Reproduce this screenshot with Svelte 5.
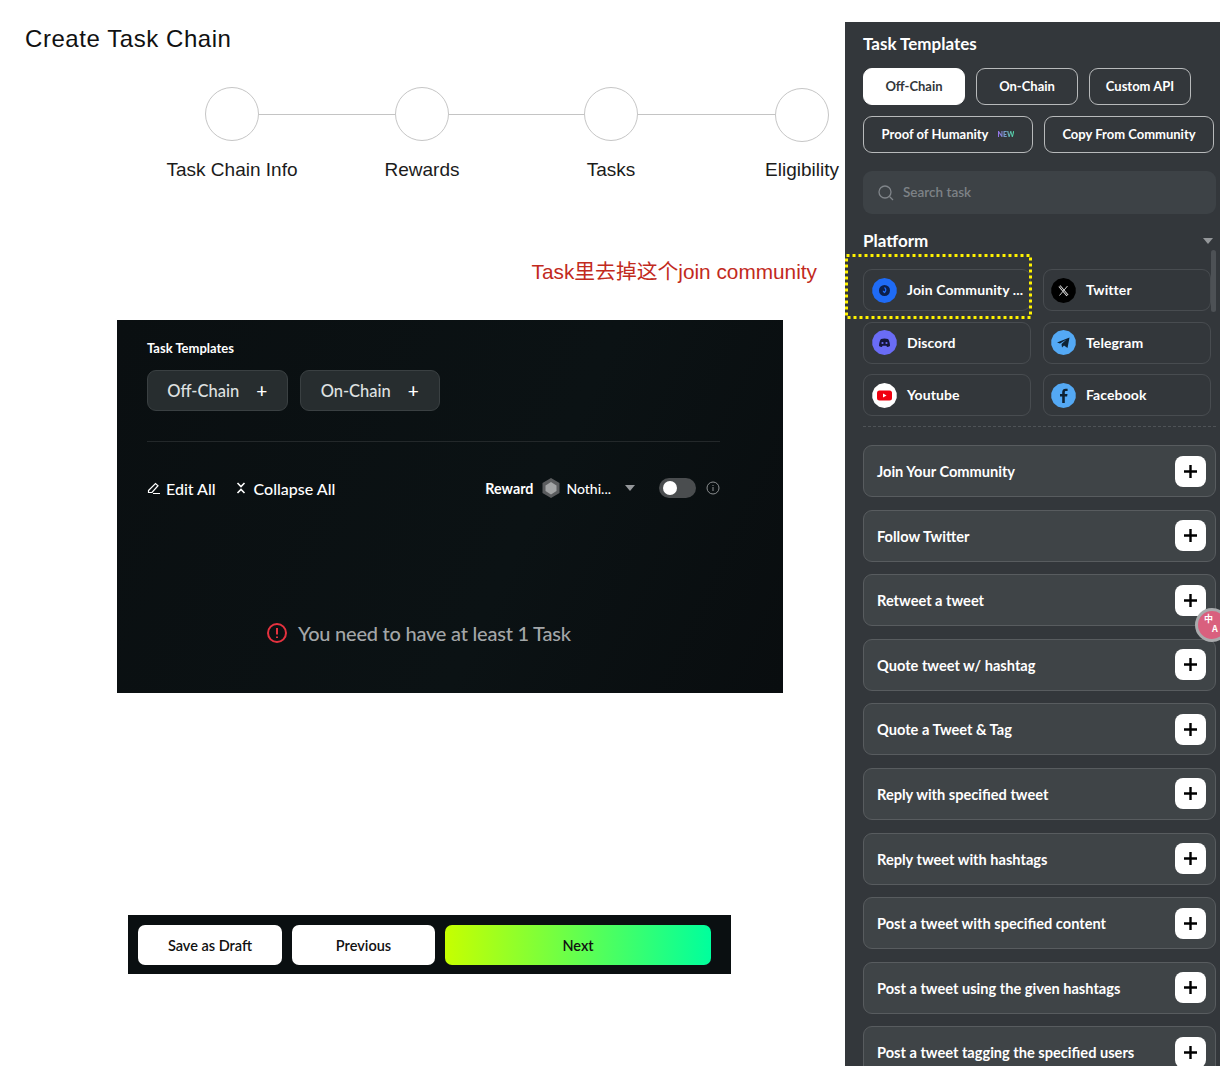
<script>
  const steps = ['Task Chain Info', 'Rewards', 'Tasks', 'Eligibility'];
  const lineWidths = [136, 135, 137];
  const tabsOne = ['Off-Chain', 'On-Chain', 'Custom API'];
  const tasks = [
    'Join Your Community', 'Follow Twitter', 'Retweet a tweet', 'Quote tweet w/ hashtag',
    'Quote a Tweet & Tag', 'Reply with specified tweet', 'Reply tweet with hashtags',
    'Post a tweet with specified content', 'Post a tweet using the given hashtags',
    'Post a tweet tagging the specified users'
  ];
  const gon = '12.5,0 18,1.3 22.5,5 24.7,10 24.7,15 22.5,20 18,23.7 12.5,25 7,23.7 2.5,20 .3,15 .3,10 2.5,5 7,1.3';
</script>

<div class="page">
  <main class="left">
    <h1>Create Task Chain</h1>
    <div class="stepper">
      {#each steps as s, i}
        <div class="step" class:low={i === 3}>
          <div class="circle"></div>
          <div class="label">{s}</div>
        </div>
        {#if i < 3}<div class="line" style="width: {lineWidths[i]}px"></div>{/if}
      {/each}
    </div>
    <p class="note">Task里去掉这个join community</p>

    <section class="panel">
      <h3>Task Templates</h3>
      <div class="chips">
        <div class="chip">Off-Chain <span>+</span></div>
        <div class="chip">On-Chain <span>+</span></div>
      </div>
      <hr />
      <div class="tools">
        <svg width="14" height="14" viewBox="0 0 14 14" fill="none" stroke="#fff" stroke-width="1.2"><path d="M6 12.500h7M1.500 9.500 8.500 2.500l2.500 2.200L5 11.500H1.500z"/></svg>
        <span class="t1">Edit All</span>
        <svg class="col" width="10" height="12" viewBox="0 0 10 12" fill="none" stroke="#fff" stroke-width="1.600"><path d="M1.500 1 5 4.500 8.500 1M1.500 11 5 7.500 8.500 11"/></svg>
        <span class="t2">Collapse All</span>
        <b class="reward">Reward</b>
        <svg class="hex" width="20" height="20" viewBox="0 0 20 20"><path d="M10 0 18.500 5v10L10 20l-8.500-5V5z" fill="#5a5c5e"/><path d="M10 4l5.500 3.500V13L10 16.500 4.500 13V7.500z" fill="#a2a4a5"/></svg>
        <span class="noth">Nothi...</span>
        <i class="caret"></i>
        <div class="toggle"><div class="knob"></div></div>
        <svg class="info" width="14" height="14" viewBox="0 0 14 14" fill="none" stroke="#8c8f91"><circle cx="7" cy="7" r="6"/><path d="M7 6v4M7 4v1"/></svg>
      </div>
      <div class="warn">
        <svg width="20" height="20" viewBox="0 0 20 20" fill="none" stroke="#e5323f" stroke-width="2"><circle cx="10" cy="10" r="9"/><path d="M10 5v6.500M10 13.500v1.600"/></svg>
        <span>You need to have at least 1 Task</span>
      </div>
    </section>

    <section class="bar">
      <button class="white">Save as Draft</button>
      <button class="white narrow">Previous</button>
      <button class="next">Next</button>
    </section>
  </main>

  <aside class="side">
    <h2>Task Templates</h2>
    <div class="tabs">
      {#each tabsOne as t, i}
        <div class="tab" class:on={i === 0}>{t}</div>
      {/each}
    </div>
    <div class="tabs two">
      <div class="tab poh">Proof of Humanity <em>NEW</em></div>
      <div class="tab cfc">Copy From Community</div>
    </div>
    <div class="search">
      <svg width="16" height="16" viewBox="0 0 16 16" fill="none" stroke="#80858a" stroke-width="1.300"><circle cx="7" cy="7" r="6"/><path d="m11.500 11.500 3.500 3.500"/></svg>
      <span>Search task</span>
    </div>
    <div class="plat"><h2>Platform</h2><i class="caret"></i></div>
    <div class="grid">
      <div class="pc">
        <svg width="25" height="25" viewBox="0 0 25 25"><polygon points={gon} fill="#1f6bf5"/><circle cx="12.500" cy="12.500" r="5.500" fill="#0c1f4a"/><path d="M12.500 9.500c2 1.500 1.500 3.500 0 5-.8-.5-1.200-1-1.200-1.800" fill="none" stroke="#1f6bf5" stroke-width="1.300"/></svg>
        <span>Join Community ...</span>
      </div>
      <div class="pc">
        <svg width="25" height="25" viewBox="0 0 25 25"><polygon points={gon} fill="#000"/><path d="m8.500 8 8 9.500" stroke="#ddd" stroke-width="2.600"/><path d="m8.500 8 8 9.500" stroke="#000" stroke-width=".9"/><path d="M16.500 8l-8 9.500" stroke="#ddd" stroke-width=".9"/></svg>
        <span>Twitter</span>
      </div>
      <div class="pc">
        <svg width="25" height="25" viewBox="0 0 25 25"><polygon points={gon} fill="#6a6cf6"/><path d="M7 16c0-3 1-6 2-7 2-.7 5-.7 7 0 1 1 2 4 2 7-1 .7-2 1-3 1l-.6-1.200h-3.800L9.900 17c-1 0-2-.3-2.900-1z" fill="#14163a"/><circle cx="10.500" cy="13" r="1.100" fill="#6a6cf6"/><circle cx="14.500" cy="13" r="1.100" fill="#6a6cf6"/></svg>
        <span>Discord</span>
      </div>
      <div class="pc">
        <svg width="25" height="25" viewBox="0 0 25 25"><polygon points={gon} fill="#54a9f5"/><path d="M6 12.500 18.500 7.500 16.500 18l-3.500-2.500-2 2-.5-3.500 5-4.500-6.500 4z" fill="#0e2233"/></svg>
        <span>Telegram</span>
      </div>
      <div class="pc">
        <svg width="25" height="25" viewBox="0 0 25 25"><polygon points={gon} fill="#fff"/><rect x="5" y="7.500" width="15" height="10" rx="2.500" fill="#f0000f"/><path d="m11 10.500 3.500 2-3.500 2z" fill="#fff"/></svg>
        <span>Youtube</span>
      </div>
      <div class="pc">
        <svg width="25" height="25" viewBox="0 0 25 25"><polygon points={gon} fill="#54a9f5"/><path d="M13.800 20v-6.500h2.300l.4-2.600h-2.700V9.400c0-.8.3-1.300 1.400-1.300h1.400V5.800c-.3 0-1.100-.1-2-.1-2 0-3.400 1.200-3.400 3.400v1.800H9v2.600h2.200V20z" fill="#0e2233"/></svg>
        <span>Facebook</span>
      </div>
    </div>
    <div class="dash"></div>
    <div class="list">
      {#each tasks as t}
        <div class="task">
          <span>{t}</span>
          <div class="plus"><svg width="13" height="13" viewBox="0 0 13 13" stroke="#000" stroke-width="2.400"><path d="M6.500 0v13M0 6.500h13"/></svg></div>
        </div>
      {/each}
    </div>
    <div class="scroll"></div>
    <svg class="hl" width="187" height="65"><rect x="1.500" y="1.500" width="184" height="62" fill="none" stroke="#fff200" stroke-width="3" stroke-dasharray="3 3"/></svg>
    <div class="trans"><span>中</span><span class="a">A</span></div>
  </aside>
</div>

<style>
  :global(body) { margin: 0; background: #fff; }
  .page { display: flex; width: 1220px; height: 1073px; overflow: hidden; font-family: Lato, sans-serif; }
  .left { width: 845px; flex: none; }
  h1 { margin: 25px 0 0 25px; font: 400 24px/28px "Liberation Sans", sans-serif; letter-spacing: .56px; color: #111; }
  .stepper { display: flex; align-items: flex-start; margin: 34px 0 0 205px; }
  .step { width: 54px; display: flex; flex-direction: column; align-items: center; flex: none; }
  .step.low { margin-top: 1px; }
  .circle { width: 52px; height: 52px; border: 1px solid #c6c6c6; border-radius: 50%; }
  .label { margin-top: 17px; font: 400 19px/24px "Liberation Sans", sans-serif; color: #1b1b1b; white-space: nowrap; }
  .step.low .label { margin-top: 16px; }
  .line { flex: none; height: 1px; margin-top: 27px; background: #c4c4c4; }
  .note { margin: 77px 0 0 0; padding-right: 28px; text-align: right; font: 400 20.800px/26px "Liberation Sans", "Noto Sans CJK SC", sans-serif; color: #c22a1d; }
  .panel { position: relative; box-sizing: border-box; width: 666px; height: 373px; margin: 35px 0 0 117px; padding: 20px 63px 0 30px; background: linear-gradient(115deg, #0a0f11, #0b1214 60%, #090d0f); color: #fff; }
  .panel h3 { margin: 0; font: 700 13px/17px Lato, sans-serif; }
  .chips { display: flex; gap: 12px; margin-top: 13px; }
  .chip { box-sizing: border-box; width: 140.500px; height: 41px; display: flex; align-items: center; justify-content: center; gap: 17px; background: #272d2f; border: 1px solid #3a4042; border-radius: 9px; font: 500 16.500px Lato, sans-serif; color: #dfe1e1; }
  .chip span { font-size: 19px; color: #fff; }
  hr { border: 0; height: 1px; margin: 30px 0 0; background: #23282a; }
  .tools { display: flex; align-items: center; height: 20px; margin-top: 36px; font: 500 16px Lato, sans-serif; white-space: nowrap; }
  .tools > * { flex: none; }
  .t1 { margin-left: 5px; }
  .col { margin-left: 20px; }
  .t2 { margin-left: 8px; }
  .reward { margin-left: 150px; font: 700 14.300px Lato, sans-serif; }
  .hex { margin-left: 8px; }
  .noth { margin-left: 5px; font-size: 14px; width: 59px; }
  .caret { width: 0; height: 0; border: 5px solid transparent; border-top: 6px solid #94979a; border-bottom: 0; }
  .toggle { width: 37px; height: 20px; margin-left: 24px; border-radius: 10px; background: #4a4d4f; position: relative; }
  .knob { position: absolute; left: 4px; top: 3px; width: 14px; height: 14px; border-radius: 50%; background: #fff; }
  .info { margin-left: 10px; }
  .warn { display: flex; align-items: center; gap: 11px; margin: 123px 0 0 120px; font: 500 20px Lato, sans-serif; letter-spacing: -.23px; color: #a3a6a8; }
  .bar { box-sizing: border-box; display: flex; gap: 10px; width: 603px; height: 59px; margin: 222px 0 0 128px; padding: 10px 20px 9px 10px; background: #0a0f11; }
  .bar button { height: 40px; border: 0; border-radius: 7px; font: 600 14.500px Lato, sans-serif; color: #111; padding: 0; }
  .white { width: 144px; background: #fff; }
  .white.narrow { width: 143px; }
  .next { flex: 1; background: linear-gradient(90deg, #c6ff00, #00ff9d); }

  .side { position: relative; box-sizing: border-box; width: 375px; height: 1044px; margin-top: 22px; padding: 0 4px 0 18px; background: #33373b; color: #fff; overflow: hidden; flex: none; }
  h2 { margin: 0; font: 700 17px/22px Lato, sans-serif; }
  .side > h2 { margin-top: 11px; }
  .tabs { display: flex; gap: 11px; margin-top: 13px; }
  .tabs.two { margin-top: 11px; gap: 11px; }
  .tab { box-sizing: border-box; width: 102px; height: 37px; padding-bottom: 2px; display: flex; align-items: center; justify-content: center; border: 1px solid #b8babb; border-radius: 9px; font: 700 13px Lato, sans-serif; }
  .tab.on { background: #fff; color: #33373b; border-color: #fff; }
  .poh { width: 170px; gap: 9px; }
  .poh em { font: 800 7px Lato, sans-serif; font-style: normal; background: linear-gradient(90deg, #9a6cf0, #4fd6a0); -webkit-background-clip: text; background-clip: text; color: transparent; }
  .cfc { width: 170px; }
  .search { display: flex; align-items: center; gap: 9px; height: 43px; margin-top: 18px; padding-left: 15px; background: #3d4246; border-radius: 9px; font: 600 13.500px Lato, sans-serif; color: #7d8287; }
  .search span { padding-bottom: 2px; }
  .plat { display: flex; align-items: center; justify-content: space-between; margin-top: 16px; padding-right: 3px; }
  .grid { display: grid; grid-template-columns: 168px 168px; gap: 10.500px 12px; margin-top: 17px; }
  .pc { box-sizing: border-box; height: 42px; display: flex; align-items: center; gap: 10px; padding-left: 8px; border: 1px solid #484c50; border-radius: 9px; font: 700 14px Lato, sans-serif; letter-spacing: .1px; }
  .pc span { padding-bottom: 1px; }
  .pc:nth-child(even) { padding-left: 7px; }
  .dash { margin-top: 10px; border-top: 1px dashed #4f5357; }
  .list { display: flex; flex-direction: column; gap: 12.600px; margin-top: 18px; }
  .task { box-sizing: border-box; height: 52px; flex: none; display: flex; align-items: center; justify-content: space-between; padding: 0 9px 0 13px; background: #3f4447; border: 1px solid #585c5f; border-radius: 9px; font: 700 14.600px Lato, sans-serif; }
  .task span { padding-top: 1px; }
  .plus { width: 31px; height: 31px; display: flex; align-items: center; justify-content: center; background: #fff; border-radius: 8px; }
  .scroll { position: absolute; left: 366px; top: 228px; width: 5px; height: 62px; border-radius: 3px; background: #4d5155; }
  .hl { position: absolute; left: 0; top: 232px; }
  .trans { position: absolute; left: 350px; top: 586px; width: 34px; height: 34px; border-radius: 50%; background: #d9607e; border: 3px solid #a9abad; box-sizing: border-box; overflow: hidden; }
  .trans span { display: block; padding: 3px 0 0 6px; font: 700 9px/9px "Noto Sans CJK SC", sans-serif; color: #fff; }
  .trans span.a { padding: 1px 0 0 14px; }
</style>
